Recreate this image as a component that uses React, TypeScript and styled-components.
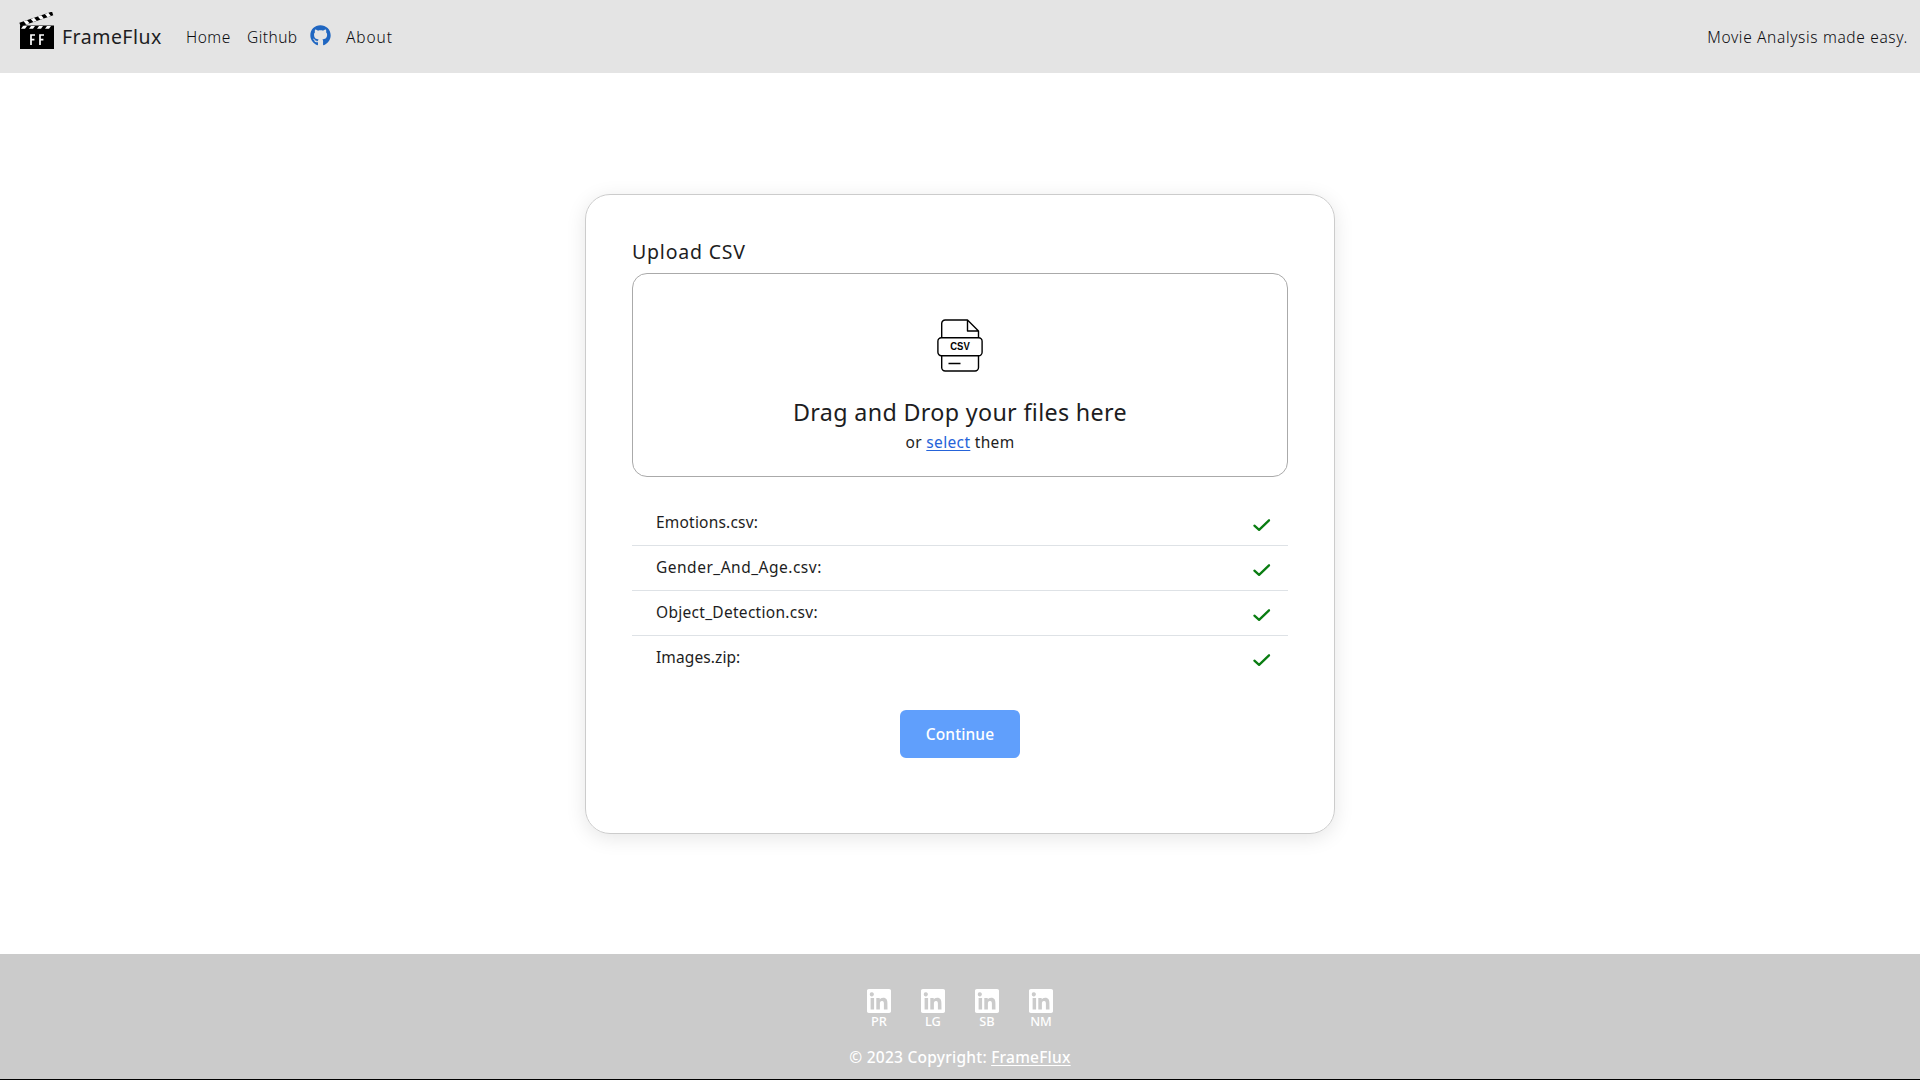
import React from 'react';
import styled, { createGlobalStyle } from 'styled-components';
import { FaGithub } from 'react-icons/fa';

const GlobalStyle = createGlobalStyle`
  *, *::before, *::after { box-sizing: border-box; }
  body {
    margin: 0;
    background: #fff;
    color: #1d1d22;
    font: 400 15.5px/24px "Noto Sans", "Open Sans", sans-serif;
  }
`;

const Page = styled.div`
  display: flex;
  flex-direction: column;
  height: 1080px;
  border-bottom: 1px solid #000;
`;

const Header = styled.header`
  display: flex;
  align-items: center;
  height: 73px;
  flex: none;
  padding: 0 12px 0 19px;
  background: #e4e4e4;
`;

const Brand = styled.a`
  display: flex;
  align-items: center;
  width: 167px;
  font-size: 19.5px;
  line-height: 30px;
  letter-spacing: 0.48px;
`;

const BrandLogo = styled.svg`
  width: 36px;
  height: 38px;
  margin: 0 7px 12px 0;
`;

const NavLink = styled.a<{ $width: number; $tracking: number }>`
  width: ${(p) => p.$width}px;
  letter-spacing: ${(p) => p.$tracking}px;
  font-weight: 300;
  color: #0c0c10;
  white-space: nowrap;
`;

const GithubLink = styled.a`
  display: flex;
  width: 36px;
  margin-bottom: 3px;
  color: #1f66c1;
`;

const Tagline = styled.span`
  margin-left: auto;
  font-weight: 300;
  letter-spacing: 0.65px;
  color: #0c0c10;
`;

const Main = styled.main`
  flex: 1;
  display: flex;
  justify-content: center;
  align-items: flex-start;
  padding-top: 121px;
`;

const Card = styled.section`
  width: 750px;
  height: 640px;
  padding: 42px 46px 0;
  border: 1px solid #ccc;
  border-radius: 25px;
  box-shadow: 0 4px 20px rgba(0, 0, 0, 0.1);
`;

const CardTitle = styled.h2`
  margin: 0 0 6px;
  font-size: 19.5px;
  font-weight: 400;
  line-height: 30px;
  letter-spacing: 0.8px;
`;

const DropZone = styled.div`
  display: flex;
  flex-direction: column;
  align-items: center;
  height: 204px;
  padding-top: 45px;
  border: 1px solid #aaa;
  border-radius: 15px;
`;

const CsvIcon = styled.svg`
  width: 46px;
  height: 53px;
  margin-bottom: 22px;
`;

const DropTitle = styled.div`
  font-size: 23.3px;
  line-height: 36px;
  letter-spacing: 0.33px;
`;

const DropHint = styled.div`
  letter-spacing: 0.35px;
`;

const SelectLink = styled.a`
  color: #2563d9;
  text-decoration: underline;
  text-underline-offset: 2px;
  text-decoration-thickness: 1px;
`;

const FileList = styled.ul`
  margin: 24px 0 29px;
  padding: 0;
  list-style: none;
`;

const FileRow = styled.li`
  display: flex;
  justify-content: space-between;
  height: 45px;
  padding: 9px 16px 0 24px;
  border-bottom: 1px solid #dee2e6;
  &:last-child { border-bottom-color: transparent; }
`;

const FileName = styled.span<{ $tracking: number }>`
  letter-spacing: ${(p) => p.$tracking}px;
`;

const CheckIcon = styled.svg`
  width: 20px;
  height: 16px;
  margin-top: 7px;
`;

const ContinueButton = styled.button`
  display: block;
  width: 120px;
  height: 48px;
  margin: 0 auto;
  padding: 0;
  border: 0;
  border-radius: 6px;
  background: #609ffc;
  color: #fff;
  font: 500 15.5px/24px "Noto Sans", "Open Sans", sans-serif;
  letter-spacing: 0.1px;
`;

const Footer = styled.footer`
  display: flex;
  flex-direction: column;
  align-items: center;
  height: 125px;
  flex: none;
  padding-top: 35px;
  background: #cbcbcb;
  color: #fff;
  font-weight: 500;
`;

const Team = styled.div`
  display: flex;
  gap: 30px;
  margin-bottom: 16px;
`;

const Member = styled.a`
  display: flex;
  flex-direction: column;
  align-items: center;
  width: 24px;
  font-size: 12.8px;
  line-height: 16px;
`;

const LinkedinIcon = styled.svg`
  display: block;
  width: 24px;
  height: 24px;
`;

const Copyright = styled.div`
  letter-spacing: 0.24px;
`;

const FooterLink = styled.a`
  text-decoration: underline;
  text-underline-offset: 2px;
  text-decoration-thickness: 1px;
`;

const files = [
  { name: 'Emotions.csv:', tracking: 0.2 },
  { name: 'Gender_And_Age.csv:', tracking: 0.5 },
  { name: 'Object_Detection.csv:', tracking: 0.29 },
  { name: 'Images.zip:', tracking: 0.1 },
];

const team = ['PR', 'LG', 'SB', 'NM'];

function Logo() {
  return (
    <BrandLogo viewBox="0 0 36 38">
      <g transform="translate(0.4 10.8) rotate(-19)">
        <rect width="34.5" height="3.8" fill="#000" />
        <path d="M4.500 0h3.600l1.400 3.800H5.900zM12 0h3.600l1.400 3.800h-3.600zM19.500 0h3.600l1.400 3.800h-3.600zM27 0h3.600l1.400 3.800h-3.600z" fill="#fff" />
      </g>
      <path d="M1 13.500h34V37H1z" fill="#000" />
      <path d="M4 14h4l-2 2.700H2zM12 14h4l-2 2.700h-4zM20 14h4l-2 2.700h-4zM28 14h4l-2 2.700h-4z" fill="#fff" />
      <path d="M12 33V23h4M12 27.700h3.400M21 33V23h4M21 27.700h3.400" fill="none" stroke="#fff" strokeWidth="1.7" />
    </BrandLogo>
  );
}

export default function App() {
  return (
    <Page>
      <GlobalStyle />
      <Header>
        <Brand><Logo />FrameFlux</Brand>
        <NavLink $width={61} $tracking={0.5}>Home</NavLink>
        <NavLink $width={63} $tracking={0.45}>Github</NavLink>
        <GithubLink><FaGithub size={21} /></GithubLink>
        <NavLink $width={60} $tracking={0.9}>About</NavLink>
        <Tagline>Movie Analysis made easy.</Tagline>
      </Header>
      <Main>
        <Card>
          <CardTitle>Upload CSV</CardTitle>
          <DropZone>
            <CsvIcon viewBox="0 0 46 53" fill="none" stroke="#000" strokeWidth="1.4" strokeLinejoin="round">
              <path d="M4.700 18.500V4.500a3.500 3.500 0 0 1 3.500-3.500H30.500L41.500 12v6.500M30.500 1v11h11M4.700 37v11.500a3.500 3.500 0 0 0 3.500 3.500h29.800a3.500 3.500 0 0 0 3.500-3.500V37M11.500 44.500h12" />
              <rect x="0.9" y="18.8" width="44.2" height="18" rx="3.5" />
              <text x="23" y="31.3" textAnchor="middle" fontFamily="Liberation Sans, sans-serif" fontWeight="700" fontSize="10" textLength="19.5" lengthAdjust="spacingAndGlyphs" fill="#000" stroke="none">CSV</text>
            </CsvIcon>
            <DropTitle>Drag and Drop your files here</DropTitle>
            <DropHint>or <SelectLink>select</SelectLink> them</DropHint>
          </DropZone>
          <FileList>
            {files.map((file) => (
              <FileRow key={file.name}>
                <FileName $tracking={file.tracking}>{file.name}</FileName>
                <CheckIcon viewBox="0 0 20 16" fill="none" stroke="#0a7d12" strokeWidth="2.3" strokeLinecap="round" strokeLinejoin="round">
                  <path d="M2.400 8.700l4.700 4.200L17 3.300" />
                </CheckIcon>
              </FileRow>
            ))}
          </FileList>
          <ContinueButton>Continue</ContinueButton>
        </Card>
      </Main>
      <Footer>
        <Team>
          {team.map((initials) => (
            <Member key={initials}>
              <LinkedinIcon viewBox="0 0 24 24" fill="#fff">
                <path d="M22.200 0H1.800C.8 0 0 .8 0 1.700v20.600c0 .9.8 1.700 1.800 1.700h20.400c1 0 1.800-.8 1.800-1.700V1.700C24 .8 23.200 0 22.200 0zM7.100 20.500H3.600V9h3.500zM5.300 7.400a2.100 2.100 0 1 1 0-4.100 2.100 2.100 0 0 1 0 4.100zM20.500 20.500h-3.600v-5.600c0-1.300 0-3-1.900-3s-2.100 1.400-2.100 2.900v5.700H9.300V9h3.400v1.600c.5-.9 1.600-1.900 3.400-1.900 3.600 0 4.300 2.400 4.300 5.500z" />
              </LinkedinIcon>
              {initials}
            </Member>
          ))}
        </Team>
        <Copyright>© 2023 Copyright: <FooterLink>FrameFlux</FooterLink></Copyright>
      </Footer>
    </Page>
  );
}
